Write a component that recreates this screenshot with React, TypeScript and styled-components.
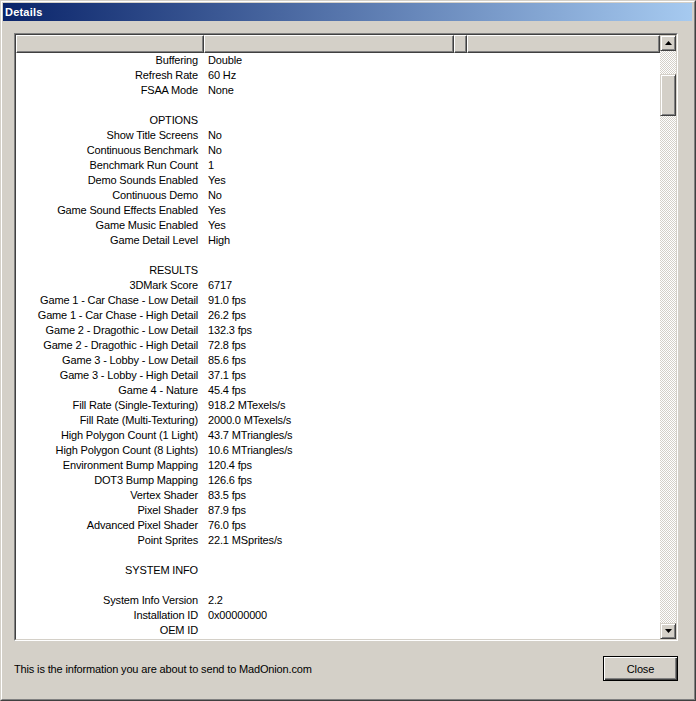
import React from 'react'
import styled, { createGlobalStyle } from 'styled-components'

const GlobalStyle = createGlobalStyle`
  html, body {
    margin: 0;
    padding: 0;
    background: #d4d0c8;
  }
  body {
    font-family: 'Liberation Sans', Arial, sans-serif;
    font-size: 11px;
    letter-spacing: -0.15px;
    color: #000;
  }
`

const Window = styled.div`
  box-sizing: border-box;
  width: 696px;
  height: 701px;
  display: flex;
  flex-direction: column;
  background: #d4d0c8;
  border: 1px solid;
  border-color: #d4d0c8 #404040 #404040 #d4d0c8;
  overflow: hidden;
  & > .inner {
    flex: 1;
    display: flex;
    flex-direction: column;
    border: 1px solid;
    border-color: #fff #808080 #808080 #fff;
    padding: 1px 2px 1px 1px;
  }
`

const TitleBar = styled.div`
  height: 18px;
  display: flex;
  align-items: center;
  padding-left: 2px;
  background: linear-gradient(to right, #0a246a, #a6caf0);
  color: #fff;
  font-family: 'Liberation Sans', Arial, sans-serif;
  font-weight: bold;
  font-size: 11px;
  letter-spacing: 0.2px;
`

const Body = styled.div`
  flex: 1;
  display: flex;
  flex-direction: column;
  padding: 12px 14px 0 11px;
`

const ListFrame = styled.div`
  height: 608px;
  box-sizing: border-box;
  border: 1px solid;
  border-color: #808080 #fff #fff #808080;
  & > .sunken {
    height: 100%;
    box-sizing: border-box;
    border: 1px solid;
    border-color: #404040 #d4d0c8 #d4d0c8 #404040;
    display: flex;
    background: #fff;
  }
`

const ListMain = styled.div`
  flex: 1;
  display: flex;
  flex-direction: column;
  overflow: hidden;
`

const Header = styled.div`
  display: flex;
  height: 18px;
  flex-shrink: 0;
`

const HeaderCell = styled.div<{ $w?: number }>`
  box-sizing: border-box;
  ${(p) => (p.$w ? `width: ${p.$w}px;` : 'flex: 1;')}
  height: 18px;
  background: #d4d0c8;
  border-top: 1px solid #fff;
  border-left: 1px solid #fff;
  border-right: 1px solid #404040;
  border-bottom: 1px solid #404040;
  box-shadow: inset -1px -1px 0 #808080;
`

const Row = styled.div`
  display: grid;
  grid-template-columns: 188px 1fr;
  height: 15px;
  line-height: 15px;
  white-space: nowrap;
  & .label {
    text-align: right;
    padding-right: 6px;
  }
  & .value {
    padding-left: 4px;
  }
`

const ScrollBar = styled.div`
  width: 16px;
  display: flex;
  flex-direction: column;
`

const ScrollButton = styled.div`
  box-sizing: border-box;
  width: 16px;
  height: 16px;
  flex-shrink: 0;
  background: #d4d0c8;
  border: 1px solid;
  border-color: #d4d0c8 #404040 #404040 #d4d0c8;
  box-shadow: inset 1px 1px 0 #fff, inset -1px -1px 0 #808080;
  display: flex;
  align-items: center;
  justify-content: center;
`

const Track = styled.div`
  flex: 1;
  display: flex;
  flex-direction: column;
  background: repeating-conic-gradient(#d4d0c8 0% 25%, #fff 0% 50%) 0 0 / 2px 2px;
`

const Thumb = styled(ScrollButton)<{ $top: number; $size: number }>`
  margin-top: ${(p) => p.$top}px;
  height: ${(p) => p.$size}px;
`

const Footer = styled.div`
  display: flex;
  align-items: center;
  justify-content: space-between;
  margin-top: 15px;
`

const FooterText = styled.div`
  font-size: 11px;
`

const DefaultButton = styled.button`
  box-sizing: border-box;
  width: 75px;
  height: 25px;
  padding: 0;
  background: #d4d0c8;
  border: 1px solid #000;
  box-shadow: inset 1px 1px 0 #fff, inset -1px -1px 0 #404040,
    inset -2px -2px 0 #808080;
  font-family: 'Liberation Sans', Arial, sans-serif;
  font-size: 11px;
  letter-spacing: -0.15px;
  color: #000;
`

const Arrow = ({ up }: { up?: boolean }) => (
  <svg width="7" height="4" viewBox="0 0 7 4">
    {up ? (
      <polygon points="3.5,0 7,4 0,4" fill="#000" />
    ) : (
      <polygon points="0,0 7,0 3.5,4" fill="#000" />
    )}
  </svg>
)

type Item = [string, string?]

const rows: Item[] = [
  ['Buffering', 'Double'],
  ['Refresh Rate', '60 Hz'],
  ['FSAA Mode', 'None'],
  [''],
  ['OPTIONS'],
  ['Show Title Screens', 'No'],
  ['Continuous Benchmark', 'No'],
  ['Benchmark Run Count', '1'],
  ['Demo Sounds Enabled', 'Yes'],
  ['Continuous Demo', 'No'],
  ['Game Sound Effects Enabled', 'Yes'],
  ['Game Music Enabled', 'Yes'],
  ['Game Detail Level', 'High'],
  [''],
  ['RESULTS'],
  ['3DMark Score', '6717'],
  ['Game 1 - Car Chase - Low Detail', '91.0 fps'],
  ['Game 1 - Car Chase - High Detail', '26.2 fps'],
  ['Game 2 - Dragothic - Low Detail', '132.3 fps'],
  ['Game 2 - Dragothic - High Detail', '72.8 fps'],
  ['Game 3 - Lobby - Low Detail', '85.6 fps'],
  ['Game 3 - Lobby - High Detail', '37.1 fps'],
  ['Game 4 - Nature', '45.4 fps'],
  ['Fill Rate (Single-Texturing)', '918.2 MTexels/s'],
  ['Fill Rate (Multi-Texturing)', '2000.0 MTexels/s'],
  ['High Polygon Count (1 Light)', '43.7 MTriangles/s'],
  ['High Polygon Count (8 Lights)', '10.6 MTriangles/s'],
  ['Environment Bump Mapping', '120.4 fps'],
  ['DOT3 Bump Mapping', '126.6 fps'],
  ['Vertex Shader', '83.5 fps'],
  ['Pixel Shader', '87.9 fps'],
  ['Advanced Pixel Shader', '76.0 fps'],
  ['Point Sprites', '22.1 MSprites/s'],
  [''],
  ['SYSTEM INFO'],
  [''],
  ['System Info Version', '2.2'],
  ['Installation ID', '0x00000000'],
  ['OEM ID', ''],
]

const App = () => {
  return (
    <>
      <GlobalStyle />
      <Window>
        <div className="inner">
          <TitleBar>Details</TitleBar>
          <Body>
            <ListFrame>
              <div className="sunken">
                <ListMain>
                  <Header>
                    <HeaderCell $w={188} />
                    <HeaderCell $w={250} />
                    <HeaderCell $w={13} />
                    <HeaderCell />
                  </Header>
                  {rows.map(([label, value], i) => (
                    <Row key={i}>
                      <span className="label">{label}</span>
                      <span className="value">{value}</span>
                    </Row>
                  ))}
                </ListMain>
                <ScrollBar>
                  <ScrollButton>
                    <Arrow up />
                  </ScrollButton>
                  <Track>
                    <Thumb $top={23} $size={42} />
                  </Track>
                  <ScrollButton>
                    <Arrow />
                  </ScrollButton>
                </ScrollBar>
              </div>
            </ListFrame>
            <Footer>
              <FooterText>
                This is the information you are about to send to MadOnion.com
              </FooterText>
              <DefaultButton>Close</DefaultButton>
            </Footer>
          </Body>
        </div>
      </Window>
    </>
  )
}

export default App
